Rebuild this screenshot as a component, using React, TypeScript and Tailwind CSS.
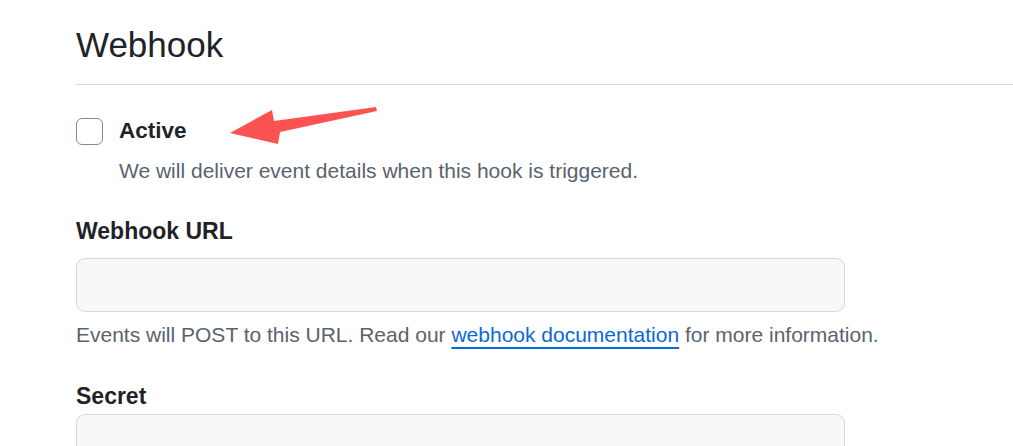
export default function App() {
  return (
    <div className="relative min-h-screen bg-white font-['Liberation_Sans',Arial,sans-serif] text-[#1f2328] overflow-hidden">
      <div className="pl-[76px]">
        {/* header */}
        <div className="pt-[23px] pb-[17px] border-b border-[#d8dee4]">
          <h2 className="text-[35px] leading-[44px] font-normal">Webhook</h2>
        </div>

        {/* active checkbox */}
        <div className="mt-[31px] flex items-center gap-[16px]">
          <div className="w-[27px] h-[27px] rounded-[6px] border border-[#818b98] bg-white" />
          <span className="text-[22.5px] leading-[30px] font-bold">Active</span>
        </div>
        <p className="mt-[10px] ml-[43px] text-[21px] leading-[30px] text-[#59636e]">
          We will deliver event details when this hook is triggered.
        </p>

        {/* url */}
        <div className="mt-[30px] text-[23px] leading-[30px] font-bold">Webhook URL</div>
        <div className="mt-[12px] w-[769px] h-[54px] rounded-[9px] border border-[#d1d9e0] bg-[#f6f8fa]" />
        <p className="mt-[8px] text-[21px] leading-[30px] text-[#59636e]">
          Events will POST to this URL. Read our{" "}
          <a href="#" className="text-[#0969da] underline decoration-2 underline-offset-[5px]">
            webhook documentation
          </a>{" "}
          for more information.
        </p>

        {/* secret */}
        <div className="mt-[31px] text-[23px] leading-[30px] font-bold">Secret</div>
        <div className="mt-[3px] w-[769px] h-[54px] rounded-[9px] border border-[#d1d9e0] bg-[#f6f8fa]" />
      </div>

      {/* annotation arrow */}
      <svg className="absolute left-0 top-0 pointer-events-none" width="1013" height="446">
        <polygon
          points="230,133 272,110 274,121 376,107 377,111 280,132 278,144"
          fill="#fd5252"
        />
      </svg>
    </div>
  )
}
